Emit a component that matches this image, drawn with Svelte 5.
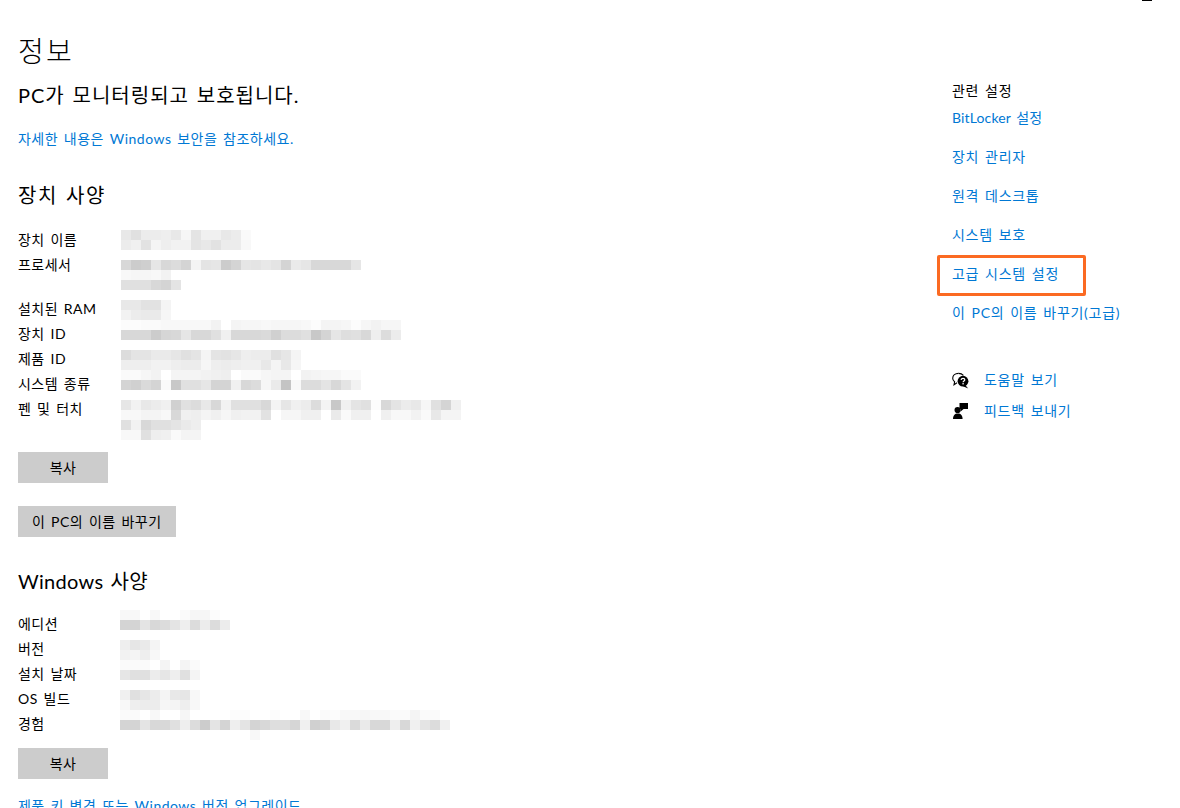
<!--
  Windows Settings "정보" page. The blurred values are drawn as mosaic lines:
  each line is a 10px strip of grey cells, same as the pixelated screenshot.
-->
<script lang="ts">
  const deviceLabels = [
    { text: '장치 이름' },
    { text: '프로세서', tall: true },
    { text: '설치된 RAM' },
    { text: '장치 ID' },
    { text: '제품 ID' },
    { text: '시스템 종류' },
    { text: '펜 및 터치' },
  ];
  const deviceMosaic = [
    'e8 e0 ec ec ee e8 f6 e4 f0 f0 e8 ec fa',
    'ec f0 e2 f4 ee f2 f2 e4 e8 e2 ec ec f8',
    '',
    'd8 cc cf e6 d8 dc d4 f4 e4 e6 cc d4 e6 e4 e8 e4 d4 ea e6 d8 d8 d8 d8 e6',
    'f8 f6 f6 f8 f2',
    'e0 e0 e0 d8 d4 e4',
    '',
    'e8 e8 e2 e2 f4',
    'f2 ec ea ea f6',
    'fc fc fa fa f8 f8 f8 f8 f8 f2 ff f4 f6 f6 f8 f6 f6 f6 f8 fc f4 f4 f6 fc f6 f2 f6 f6',
    'd8 d8 d8 cc d6 d8 e6 d8 d8 e0 f0 d8 d8 d8 da d0 dc dc e0 c8 d4 e6 de e0 d8 ee dc ec',
    '',
    'dc e4 e4 ea ea e6 e0 e4 f4 e4 e2 e6 ee ec ec e0 e6 f4',
    'ee ee ee f2 f2 ee ec ec f6 ee ec ee f0 f0 e8 f4 e8 f6',
    'fa fa f6 f2 ff f4 f4 f4 f2 f0 ee ff fa fa f6 f4 f4 ff f2 f4 f6 f6 fa fa',
    'd4 d0 da d4 fa c8 e0 e0 e6 d4 d4 f0 d8 dc f6 ea c4 f8 dc dc e4 d8 e4 f2',
    '',
    'e6 f2 e8 ec f0 d0 e0 dc e8 d8 f2 e0 e0 e0 d8 f4 e6 f0 ec dc f4 c8 f0 e4 e0 fc d8 e4 ec e8 f6 e0 d4 f0',
    'f8 f8 f4 f4 f8 d8 f0 ee f4 f0 f6 f0 f2 f2 e2 ff f6 f6 f0 f0 ff ea fa f0 f0 ff f0 f8 f8 f2 fa e8 f4 f4',
    'e0 f2 d8 e0 e0 e4 ea ee',
    'f8 f8 e0 ee f0 fa f4 f4',
  ];

  const windowsLabels = ['에디션', '버전', '설치 날짜', 'OS 빌드', '경험'];
  const windowsMosaic = [
    'f8 f8 ff f8 ff ff fa f6 f6 fc ff',
    'd4 d4 e4 d8 dc e4 ee dc ec dc ec',
    '',
    'ee e6 ea f4',
    'f2 f4 ee f8',
    'fa fa fa ff f4 ff f4 fa',
    'e6 e0 e0 ec e6 ee e0 f4',
    '',
    'f0 e0 e6 ec f4 e8 e6 f8',
    'f8 ee ec ec f6 f4 ee f8',
    'fa fa ff f8 ff ff f6 ff ff ff ff fc fc ff ff fc ff ff f8 ff fa fc f8 f8 f6 f8 f8 fa fa f4 fa fa ff',
    'd4 d4 e4 d8 d8 e0 ee dc cc e4 d4 ee e4 d4 d8 de de d6 f0 d0 d4 e8 f0 da ea d8 d8 ee d8 f0 e4 dc f0',
    'ff ff ff ff ff ff ff ff ff ff ff ff ff f8',
  ];

  const relatedLinks = [
    { text: 'BitLocker 설정', latin: true },
    { text: '장치 관리자' },
    { text: '원격 데스크톱' },
    { text: '시스템 보호' },
    { text: '고급 시스템 설정', marked: true },
    { text: '이 PC의 이름 바꾸기(고급)' },
  ];

  const cells = (line: string) => (line ? line.split(' ') : []);
</script>

{#snippet mosaic(lines: string[])}
  <div class="mosaic" aria-hidden="true">
    {#each lines as line}
      <div class="mosaic-line">
        {#each cells(line) as c}
          <span style="background:#{c}{c}{c}"></span>
        {/each}
      </div>
    {/each}
  </div>
{/snippet}

<div class="page">
  <span class="window-mark"></span>

  <main>
    <h1>정보</h1>
    <p class="status">PC가 모니터링되고 보호됩니다.</p>
    <a class="link more" href="#security">자세한 내용은 Windows 보안을 참조하세요.</a>

    <h2 class="device-title">장치 사양</h2>
    <div class="specs device">
      <ul class="labels">
        {#each deviceLabels as label}
          <li class:tall={label.tall}>{label.text}</li>
        {/each}
      </ul>
      {@render mosaic(deviceMosaic)}
    </div>
    <button type="button" class="copy">복사</button>
    <button class="rename" type="button">이 PC의 이름 바꾸기</button>

    <h2 class="windows-title">Windows 사양</h2>
    <div class="specs windows">
      <ul class="labels">
        {#each windowsLabels as label}
          <li>{label}</li>
        {/each}
      </ul>
      {@render mosaic(windowsMosaic)}
    </div>
    <button type="button" class="copy">복사</button>
    <a class="link upgrade" href="#upgrade">제품 키 변경 또는 Windows 버전 업그레이드</a>
  </main>

  <aside>
    <h3>관련 설정</h3>
    <ul class="related">
      {#each relatedLinks as item}
        <li class:marked={item.marked} class:latin={item.latin}><a class="link" href="#related">{item.text}</a></li>
      {/each}
    </ul>
    <ul class="support">
      <li>
        <svg viewBox="0 0 18 18" width="18" height="18" aria-hidden="true">
          <path d="M6.5 2.4C3.2 2.4.7 4.5.7 7.2c0 1.5.7 2.7 1.9 3.6L2 13.8l3-2" fill="none" stroke="#000" stroke-width="1.1"/>
          <path d="M6.5 2.4c2 0 3.8.7 4.9 1.9" fill="none" stroke="#000" stroke-width="1.1"/>
          <circle cx="11" cy="10.2" r="5.4" fill="#000"/>
          <path d="M13.2 14l3 3.6-5.2-2.4z" fill="#000"/>
          <path d="M9.2 8.9c0-1.1.8-1.6 1.8-1.6s1.8.6 1.8 1.5c0 1.2-1.7 1.3-1.7 2.5" fill="none" stroke="#fff" stroke-width="1.2"/>
          <rect x="10.4" y="12.1" width="1.4" height="1.3" fill="#fff"/>
        </svg>
        <a class="link" href="#help">도움말 보기</a>
      </li>
      <li>
        <svg viewBox="0 0 18 18" width="18" height="18" aria-hidden="true">
          <path d="M7.5 1H16v6h-4.4L8.6 9.4V7H7.5z" fill="#000"/>
          <circle cx="5.6" cy="8" r="3.1" fill="#000"/>
          <path d="M1 17c0-3.6 1.8-5.6 4.8-5.6s4.8 2 4.8 5.6z" fill="#000"/>
        </svg>
        <a class="link" href="#feedback">피드백 보내기</a>
      </li>
    </ul>
  </aside>
</div>

<style>
  :global(body) {
    margin: 0;
    background: #fff;
  }
  .page {
    position: relative;
    display: flex;
    justify-content: space-between;
    height: 808px;
    overflow: hidden;
    color: #000;
    font-family: Lato, 'Noto Sans CJK KR', sans-serif;
    font-size: 14px;
    line-height: 20px;
    letter-spacing: 0.035em;
    word-spacing: 0.12em;
  }
  .window-mark {
    position: absolute;
    top: 0;
    left: 1142px;
    width: 10px;
    height: 1px;
    background: #000;
  }
  main {
    display: flex;
    flex-direction: column;
    align-items: flex-start;
    padding-left: 18px;
  }
  main > * {
    flex: none;
  }
  h1 {
    margin: 31px 0 0;
    font-size: 28px;
    font-weight: 300;
    line-height: 40px;
    letter-spacing: 0.08em;
  }
  .status {
    margin: 9px 0 0;
    font-size: 20px;
    line-height: 30px;
    letter-spacing: 0.05em;
  }
  .link {
    color: #0078d4;
    text-decoration: none;
  }
  .more {
    margin-top: 19px;
  }
  h2 {
    margin: 0;
    font-size: 20px;
    font-weight: 400;
    line-height: 30px;
  }
  .device-title {
    margin-top: 31px;
    letter-spacing: 0.075em;
  }
  .specs {
    display: flex;
  }
  .labels {
    list-style: none;
    margin: 0;
    padding: 0;
    width: 103px;
  }
  .labels li {
    height: 25px;
    line-height: 25px;
  }
  .labels li.tall {
    height: 44px;
  }
  .device {
    margin-top: 17px;
    height: 225px;
  }
  .windows {
    margin-top: 11px;
    height: 141px;
  }
  .windows .labels {
    width: 102px;
    padding-top: 4px;
  }
  .mosaic {
    margin-top: 3px;
  }
  .mosaic-line {
    display: flex;
    height: 10px;
  }
  .mosaic-line span {
    width: 10px;
    height: 10px;
  }
  button {
    height: 31px;
    border: none;
    padding: 0 14px;
    background: #ccc;
    color: #000;
    font: inherit;
    letter-spacing: inherit;
    word-spacing: inherit;
  }
  .copy {
    width: 90px;
    padding: 0;
  }
  .rename {
    margin-top: 23px;
  }
  .windows-title {
    margin-top: 29px;
    letter-spacing: 0.015em;
  }
  .upgrade {
    margin-top: 17px;
    white-space: nowrap;
  }
  aside {
    width: 228px;
    padding-top: 81px;
    letter-spacing: 0.05em;
  }
  h3 {
    margin: 0;
    font-size: 14px;
    font-weight: 400;
    line-height: 20px;
  }
  .related,
  .support {
    list-style: none;
    margin: 0;
    padding: 0;
  }
  .related {
    margin-top: 7px;
  }
  .related li {
    position: relative;
    height: 39px;
    line-height: 20px;
  }
  .related li.latin {
    letter-spacing: 0.01em;
  }
  .related li.marked::after {
    content: '';
    position: absolute;
    left: -15px;
    top: -9px;
    width: 143px;
    height: 35px;
    border: 3px solid #fb6a22;
    border-radius: 2px;
  }
  .support {
    margin-top: 22px;
  }
  .support li {
    display: flex;
    align-items: center;
    gap: 14px;
    height: 31px;
  }
  .support svg {
    display: block;
  }
</style>
